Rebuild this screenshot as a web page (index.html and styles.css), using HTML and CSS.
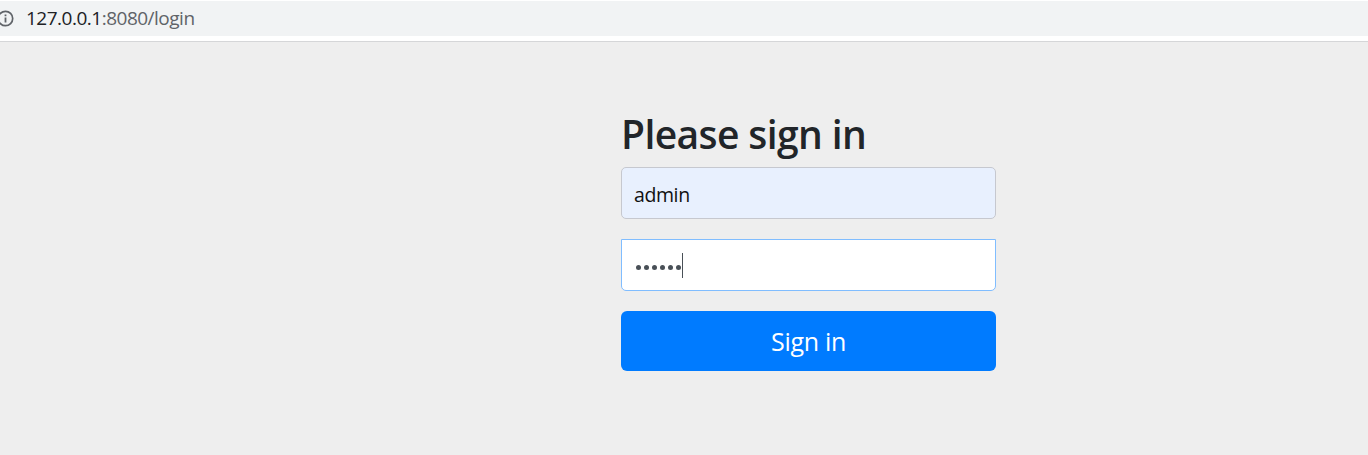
FILE: index.html
```html
<!DOCTYPE html>
<html lang="en">
<head>
<meta charset="utf-8">
<title>Please sign in</title>
<link rel="stylesheet" href="styles.css">
</head>
<body>
<header class="toolbar">
  <div class="address">
    <svg class="info" viewBox="0 0 17 17" width="17" height="17"><circle cx="8.5" cy="8.5" r="7.2" fill="none" stroke="#5f6368" stroke-width="1.7"/><path d="M8.5 7.6v5M8.5 4.4v1.9" stroke="#5f6368" stroke-width="1.8"/></svg>
    <span class="url"><span class="host">127.0.0.1</span>:8080/login</span>
  </div>
</header>
<main class="page">
  <form class="signin">
    <h2 class="title">Please sign in</h2>
    <div class="field username"><span class="value">admin</span></div>
    <div class="field password"><span class="dots"><i></i><i></i><i></i><i></i><i></i><i></i></span><span class="caret"></span></div>
    <button class="submit" type="button">Sign in</button>
  </form>
</main>
</body>
</html>
```
FILE: styles.css
```css
* { box-sizing: border-box; }
body { margin: 0; height: 455px; overflow: hidden; background: #eee; font-family: "Open Sans", "Noto Sans", sans-serif; color: #212529; }
.toolbar { height: 42px; padding-top: 1px; background: #fff; border-bottom: 1px solid #d5d6d8; }
.address { height: 35px; background: #f1f3f4; display: flex; align-items: center; }
.info { margin-left: -3px; flex: none; }
.url { margin-left: 12px; font-size: 19px; letter-spacing: -0.5px; line-height: 35px; color: #5f6368; }
.host { color: #202124; }
.page { padding: 68px 0 0 621px; }
.signin { width: 375px; display: flex; flex-direction: column; }
.title { margin: 0 0 9px; height: 48px; line-height: 48px; font-size: 39px; letter-spacing: -0.6px; font-weight: 600; white-space: nowrap; }
.field { height: 52px; border: 1px solid #c6c8cf; padding: 3px 12px 0; display: flex; align-items: center; margin-bottom: 20px; font-size: 19.5px; letter-spacing: -0.4px; color: #111; }
.username { background: #e8f0fe; border-radius: 5px; }
.password { background: #fff; border-color: #80bdff; border-radius: 0 0 5px 5px; padding: 0 14px; }
.dots { display: flex; gap: 3px; padding-top: 4px; }
.dots i { width: 5px; height: 5px; border-radius: 50%; background: #495057; }
.caret { width: 1px; height: 25px; margin-left: 1px; background: #495057; }
.submit { height: 60px; border: 0; border-radius: 6px; background: #007bff; color: #fff; font: 25px "Open Sans", "Noto Sans", sans-serif; letter-spacing: -0.3px; padding: 0; }
```
